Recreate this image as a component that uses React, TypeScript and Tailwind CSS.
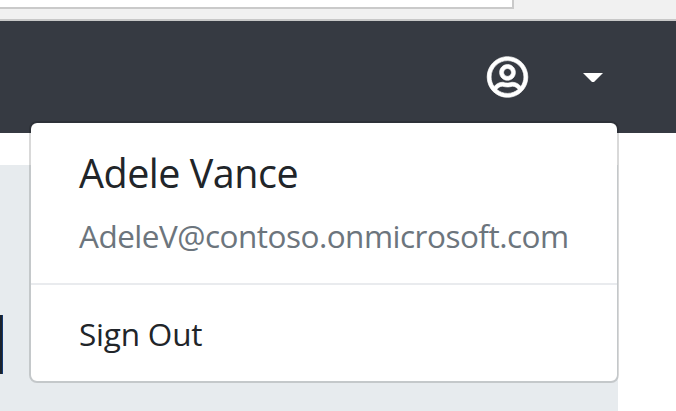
import { FaRegUserCircle } from "react-icons/fa";

export default function App() {
  return (
    <div className="relative h-[411px] w-[676px] overflow-hidden bg-white font-['Open_Sans','Noto_Sans',sans-serif]">
      <div className="h-[21px] border-b-2 border-[#c8c8c8] bg-[#f1f1f1]">
        <div className="h-[9px] w-[514px] border-r-2 border-b-2 border-[#cacaca] bg-white" />
      </div>
      <header className="flex h-28 items-center justify-end bg-[#363a42] pr-[73px] text-white">
        <FaRegUserCircle className="mr-[54px] mb-px h-[42px] w-[43px] overflow-visible stroke-current stroke-[8px]" />
        <svg className="mt-px h-[10px] w-5" viewBox="0 0 20 10" fill="currentColor"><path d="M0 0h20L11 9H9z" /></svg>
      </header>
      <main className="flex h-[278px] pt-8">
        <div className="w-[618px] bg-[#e7ebee] pt-[150px]">
          <div className="h-[59px] w-[3px] border-r border-[#123a75] bg-[#1c222b]" />
        </div>
      </main>
      <section className="absolute top-[121px] left-[29px] h-[262px] w-[590px] rounded-lg border-2 border-black/15 bg-white bg-clip-padding">
        <div className="flex h-[162px] flex-col border-b-2 border-[#e9ebee] pt-6 pl-12">
          <h1 className="h-[52px] text-[39.5px] leading-[52px] tracking-[-0.5px] text-[#212529]"><span>Adele Vance</span></h1>
          <p className="mt-[17px] h-10 text-[31.5px] leading-10 tracking-[-0.51px] text-[#6c757d]"><span>AdeleV@contoso.onmicrosoft.com</span></p>
        </div>
        <button className="mt-[29px] ml-12 text-[31.5px] leading-10 tracking-[-0.2px] text-[#212529]">Sign Out</button>
      </section>
    </div>
  );
}
